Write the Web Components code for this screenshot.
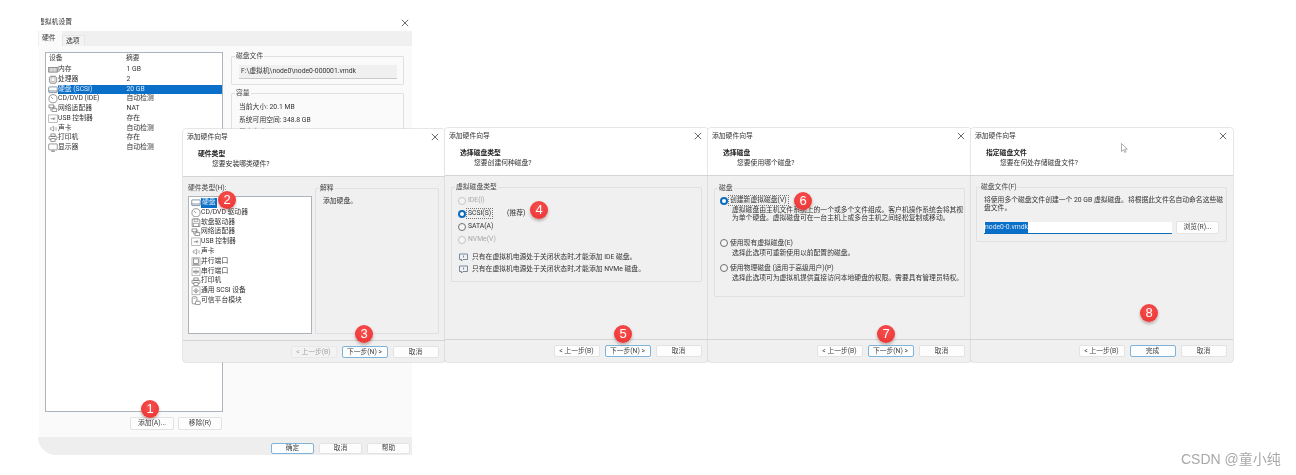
<!DOCTYPE html>
<html lang="zh"><head><meta charset="utf-8"><title>添加硬盘</title>
<style>
html,body{margin:0;padding:0;background:#fff}
body{font:6.8px/8.4px Roboto,"Noto Sans CJK SC",sans-serif;color:#333}
desk-top{filter:blur(.3px)}
</style></head><body>
<desk-top>
  <vm-window style="left:38px;top:13px;width:374px;height:442px">
    <tree-row slot="tree" icon="mem" name="内存" value="1 GB"></tree-row>
    <tree-row slot="tree" icon="cpu" name="处理器" value="2"></tree-row>
    <tree-row slot="tree" icon="hdd" name="硬盘 (SCSI)" value="20 GB" selected></tree-row>
    <tree-row slot="tree" icon="cd" name="CD/DVD (IDE)" value="自动检测"></tree-row>
    <tree-row slot="tree" icon="net" name="网络适配器" value="NAT"></tree-row>
    <tree-row slot="tree" icon="usb" name="USB 控制器" value="存在"></tree-row>
    <tree-row slot="tree" icon="snd" name="声卡" value="自动检测"></tree-row>
    <tree-row slot="tree" icon="prn" name="打印机" value="存在"></tree-row>
    <tree-row slot="tree" icon="mon" name="显示器" value="自动检测"></tree-row>
  </vm-window>

  <wizard-dialog style="left:183px;top:129px;width:262px;height:233px" heading="硬件类型" sub="您要安装哪类硬件?" back="disabled" next="下一步(N) &gt;">
    <hw-picker>
      <hw-item icon="hdd" name="硬盘" selected></hw-item>
      <hw-item icon="cd" name="CD/DVD 驱动器"></hw-item>
      <hw-item icon="fdd" name="软盘驱动器"></hw-item>
      <hw-item icon="net" name="网络适配器"></hw-item>
      <hw-item icon="usb" name="USB 控制器"></hw-item>
      <hw-item icon="snd" name="声卡"></hw-item>
      <hw-item icon="par" name="并行端口"></hw-item>
      <hw-item icon="ser" name="串行端口"></hw-item>
      <hw-item icon="prn" name="打印机"></hw-item>
      <hw-item icon="scs" name="通用 SCSI 设备"></hw-item>
      <hw-item icon="tpm" name="可信平台模块"></hw-item>
    </hw-picker>
  </wizard-dialog>

  <wizard-dialog style="left:445px;top:128px;width:263px;height:234px" heading="选择磁盘类型" sub="您要创建何种磁盘?" next="下一步(N) &gt;">
    <group-box label="虚拟磁盘类型" style="height:95px;padding:6px 0 0 6px">
      <radio-row disabled label="IDE(I)"></radio-row>
      <radio-row checked focus label="SCSI(S)" note="(推荐)"></radio-row>
      <radio-row label="SATA(A)"></radio-row>
      <radio-row disabled label="NVMe(V)"></radio-row>
      <note-line style="margin-top:5px">只有在虚拟机电源处于关闭状态时,才能添加 IDE 磁盘。</note-line>
      <note-line>只有在虚拟机电源处于关闭状态时,才能添加 NVMe 磁盘。</note-line>
    </group-box>
  </wizard-dialog>

  <wizard-dialog style="left:708px;top:128px;width:263px;height:234px" heading="选择磁盘" sub="您要使用哪个磁盘?" next="下一步(N) &gt;">
    <group-box label="磁盘" style="height:109px;margin-top:1px;padding:6px 0 0 5px">
      <radio-row checked focus label="创建新虚拟磁盘(V)" style="height:11px"></radio-row>
      <option-desc style="margin-bottom:15px">虚拟磁盘由主机文件系统上的一个或多个文件组成。客户机操作系统会将其视<br>为单个硬盘。虚拟磁盘可在一台主机上或多台主机之间轻松复制或移动。</option-desc>
      <radio-row label="使用现有虚拟磁盘(E)" style="height:11px"></radio-row>
      <option-desc style="margin-bottom:6px">选择此选项可重新使用以前配置的磁盘。</option-desc>
      <radio-row label="使用物理磁盘 (适用于高级用户)(P)" style="height:11px"></radio-row>
      <option-desc>选择此选项可为虚拟机提供直接访问本地硬盘的权限。需要具有管理员特权。</option-desc>
    </group-box>
  </wizard-dialog>

  <wizard-dialog style="left:971px;top:128px;width:262px;height:234px" heading="指定磁盘文件" sub="您要在何处存储磁盘文件?" next="完成" back="enabled">
    <group-box label="磁盘文件(F)" style="height:55px;margin-left:-1px;padding:8px 0 0 7px">
      <file-picker></file-picker>
    </group-box>
  </wizard-dialog>

  <mouse-cursor style="left:1121px;top:143px"></mouse-cursor>

  <step-badge style="left:150px;top:409px">1</step-badge>
  <step-badge style="left:227px;top:200px">2</step-badge>
  <step-badge style="left:364px;top:334px">3</step-badge>
  <step-badge style="left:539px;top:210px">4</step-badge>
  <step-badge style="left:623px;top:334px">5</step-badge>
  <step-badge style="left:803px;top:201px">6</step-badge>
  <step-badge style="left:886px;top:334px">7</step-badge>
  <step-badge style="left:1149px;top:313px">8</step-badge>

  <water-mark>CSDN @童小纯</water-mark>
</desk-top>

<script>
const ICONS={
 mem:'<rect x=".5" y="2.5" width="9" height="5" fill="#bbb"/><path d="M2 3v4M3.5 3v4M5 3v4M6.500 3v4M8 3v4" stroke="#eee"/>',
 cpu:'<rect x="1.500" y="1.500" width="7" height="7" rx="1.500"/><rect x="3" y="3" width="4" height="4" stroke="#aaa"/><path d="M3 .5v1M5 .5v1M7 .5v1M3 8.500v1M5 8.500v1M7 8.500v1M.5 3h1M.5 5h1M.5 7h1M8.500 3h1M8.500 5h1M8.500 7h1" stroke="#888"/>',
 hdd:'<rect x=".5" y="2" width="9" height="6" rx=".8" stroke="#46617c"/><path d="M.5 6.300h9" stroke="#46617c"/>',
 cd:'<circle cx="5" cy="5" r="4.300"/><path d="M2.800 3 5.200 5.400"/>',
 net:'<rect x=".8" y="1" width="5" height="3"/><rect x="4" y="5" width="5" height="3"/><path d="M2.500 4v2.500H4M7 5V2.500H5.800" stroke="#888"/>',
 usb:'<rect x=".5" y="1" width="9" height="8" stroke="#999"/><path d="M2.500 5h5M5 5l1.500-1.500M5 5l1.500 1.500"/>',
 snd:'<path d="M2 4h1.500L5.500 2.300v5.400L3.500 6H2z" stroke="#888"/><path d="M6.800 3.500q1 1.500 0 3M8 2.800q1.400 2.200 0 4.400" stroke="#aaa"/>',
 prn:'<rect x="2.800" y="1" width="4.400" height="2.500"/><rect x=".8" y="3.500" width="8.400" height="3.200" rx=".6"/><rect x="2.800" y="6" width="4.400" height="2.800" fill="#fff"/>',
 mon:'<rect x=".5" y="1" width="9" height="6.300" rx=".6"/><path d="M3 8.800h4M5 7.300v1.500"/>',
 fdd:'<path d="M1 1h7l1 1v7H1z"/><rect x="3" y="1" width="4" height="2.500" stroke="#888"/><rect x="2.500" y="5.500" width="5" height="3.500" stroke="#888"/>',
 par:'<rect x=".8" y=".8" width="8.400" height="8.400" stroke="#999"/><rect x="2.500" y="2" width="5" height="5"/><path d="M1.800 8h6.400"/>',
 ser:'<rect x=".8" y=".8" width="8.400" height="8.400" stroke="#999"/><path d="M2 5h6M5 2.500v5M3 3.500v3M7 3.500v3"/>',
 scs:'<rect x=".8" y=".8" width="8.400" height="8.400" stroke="#999"/><path d="M5 2.500 7.500 5 5 7.500 2.500 5z"/><circle cx="5" cy="5" r=".8"/>',
 tpm:'<rect x="1" y=".8" width="5" height="7.500" rx="1"/><rect x="4.500" y="5.500" width="5" height="3.500" rx=".8" fill="#fff"/><path d="M2.500 2.500h2" stroke="#888"/>'
};
const h=(s)=>String(s??'').replace(/&/g,'&amp;').replace(/</g,'&lt;').replace(/>/g,'&gt;').replace(/"/g,'&quot;');
class Base extends HTMLElement{
  constructor(){super();this.attachShadow({mode:'open'});}
  connectedCallback(){this.shadowRoot.innerHTML=this.render();}
}
const def=(n,r)=>customElements.define(n,class extends Base{render(){return r.call(this,this)}});

def('desk-top',()=>`<style>:host{display:block;position:relative;width:1296px;height:475px;overflow:hidden;background:#fff}</style><slot></slot>`);

def('hw-icon',e=>`<style>:host{display:block;width:10px;height:9.500px}svg{display:block;width:100%;height:100%;fill:none;stroke:#666;stroke-width:.7}</style><svg viewBox="0 0 10 10">${ICONS[e.getAttribute('name')]||''}</svg>`);

def('push-btn',e=>`<style>
:host{display:flex;align-items:center;justify-content:center;box-sizing:border-box;width:46px;height:12px;background:#fdfdfd;border:1px solid #e3e3e3;border-radius:2px;color:#444;white-space:nowrap}
:host([primary]){border-color:#7fb3d8;background:#fcfdfe}
:host([disabled]){background:#f3f3f3;color:#a5a5a5;border-color:#e8e8e8}
</style><slot></slot>`);

def('tree-row',e=>{const sel=e.hasAttribute('selected');return `<style>
:host{display:grid;grid-template-columns:11px 68.500px 1fr;height:9.750px;line-height:9.750px;align-items:center;white-space:nowrap;padding-left:1px}
.n,.v{height:100%}
.n.s,.v.s{background:#0a6fc9;color:#dce9f5}
hw-icon{margin-left:1px}
</style><hw-icon name="${h(e.getAttribute('icon'))}"></hw-icon><div class="n ${sel?'s':''}">${h(e.getAttribute('name'))}</div><div class="v ${sel?'s':''}">${h(e.getAttribute('value'))}</div>`});

def('group-box',e=>`<style>
:host{display:block;position:relative;box-sizing:border-box;border:1px solid #e0e0e0;border-radius:1px}
.l{position:absolute;left:3px;top:-5px;padding:0 1px;background:var(--gb,#f0f0f0);line-height:9px;white-space:nowrap;color:#444}
</style><span class="l">${h(e.getAttribute('label'))}</span><slot></slot>`);

def('vm-window',e=>`<style>
:host{position:absolute;display:flex;flex-direction:column;box-sizing:border-box;background:#fff;border-bottom-left-radius:18px;overflow:hidden}
.title{display:flex;align-items:center;justify-content:space-between;height:18px;flex:none;padding:1px 3px 0 0;box-sizing:border-box}
.title span{clip-path:inset(0 0 0 3px);line-height:17px}
.tabs{display:flex;height:15px;flex:none;background:#f0f0f0;padding-left:1px;box-sizing:border-box}
.tab{width:23px;box-sizing:border-box;padding-left:3px;line-height:15px;background:#fafafa}
.tab+.tab{padding-left:3px;margin-top:4px;line-height:10px;background:#f3f3f3;border:solid #e6e6e6;border-width:1px 1px 0}
.panel{flex:none;height:391px;box-sizing:border-box;background:#fafafa;margin-left:1px;padding:6px 0 0 6px;display:grid;grid-template-columns:178px 173px;column-gap:8px;align-content:start}
.left{display:flex;flex-direction:column}
.list{height:360px;box-sizing:border-box;border:1px solid #adb4bb;background:#fff}
.head{display:grid;grid-template-columns:77px 1fr;height:12px;line-height:11px;padding-left:3px;color:#444}
.btns{display:flex;justify-content:flex-end;gap:4px;margin:5px 1px 0 0}
.btns push-btn{width:44px;height:13px}
.right{display:flex;flex-direction:column;--gb:#fafafa}
.file{margin:8px 6px 0 7px;height:14px;box-sizing:border-box;background:#f0f0f0;border-bottom:1px solid #c9c9c9;padding-left:2px;line-height:13px;white-space:nowrap}
.cap{padding:7px 0 0 7px;line-height:12.500px}
.foot{flex:1;background:#eeeeee;display:flex;justify-content:flex-end;gap:5px;padding:6px 2px 0 0}
.foot push-btn{width:43px;height:11px}
</style>
<div class="title"><span>虚拟机设置</span><x-mark></x-mark></div>
<div class="tabs"><div class="tab">硬件</div><div class="tab">选项</div></div>
<div class="panel">
  <div class="left">
    <div class="list"><div class="head"><span>设备</span><span>摘要</span></div><slot name="tree"></slot></div>
    <div class="btns"><push-btn>添加(A)...</push-btn><push-btn>移除(R)</push-btn></div>
  </div>
  <div class="right">
    <group-box label="磁盘文件" style="height:29px;margin-top:4px"><div class="file">F:\\虚拟机\\node0\\node0-000001.vmdk</div></group-box>
    <group-box label="容量" style="height:200px;margin-top:8px"><div class="cap">当前大小: 20.1 MB<br>系统可用空间: 348.8 GB<br>最大大小: 20 GB</div></group-box>
  </div>
</div>
<div class="foot"><push-btn primary>确定</push-btn><push-btn>取消</push-btn><push-btn>帮助</push-btn></div>`);

def('x-mark',()=>`<style>:host{display:block;width:8px;height:8px}svg{display:block;width:100%;height:100%}</style><svg viewBox="0 0 8 8"><path d="M.8.8l6.400 6.400M7.200.8.800 7.200" stroke="#444" stroke-width=".8" fill="none"/></svg>`);

def('wizard-dialog',e=>{const b=e.getAttribute('back');return `<style>
:host{position:absolute;display:flex;flex-direction:column;box-sizing:border-box;background:#f0f0f0;border-radius:3px;box-shadow:0 0 0 .5px #d6d6d6,0 0 2px rgba(0,0,0,.12);overflow:hidden}
.top{background:#fff;height:48px;flex:none;border-bottom:1px solid #d4d4d4;box-sizing:border-box}
.title{display:flex;justify-content:space-between;align-items:center;height:16px;padding:0 6px 0 4px}
.hd{font-weight:700;margin:4px 0 0 15px;line-height:10px;color:#222}
.sub{margin-left:29px;line-height:10px}
.body{flex:none;height:163px;box-sizing:border-box;padding:11px 6px 0 6px;display:flex;flex-direction:column}
.foot{flex:1;border-top:1px solid #d4d4d4;display:flex;justify-content:flex-end;gap:5px;padding:5px 6.500px 0 0}
</style>
<div class="top"><div class="title"><span>添加硬件向导</span><x-mark></x-mark></div><div class="hd">${h(e.getAttribute('heading'))}</div><div class="sub">${h(e.getAttribute('sub'))}</div></div>
<div class="body"><slot></slot></div>
<div class="foot"><push-btn ${b==='disabled'?'disabled':''}>&lt; 上一步(B)</push-btn><push-btn primary>${h(e.getAttribute('next'))}</push-btn><push-btn>取消</push-btn></div>`});

def('hw-picker',()=>`<style>
:host{display:grid;grid-template-columns:124px 124px;column-gap:3px;grid-template-rows:8px 138px;margin-left:-1px;height:146px}
.lab{line-height:8px;margin-top:-4px;white-space:nowrap;color:#444}
.list{grid-row:2;border:1px solid #adb4bb;background:#fff;box-sizing:border-box;padding:1px 0 0 2px}
group-box{grid-column:2;grid-row:1/3;height:146px}
.t{padding:8px 0 0 7px}
</style><div class="lab">硬件类型(H):</div><div class="list"><slot></slot></div><group-box label="解释"><div class="t">添加硬盘。</div></group-box>`);

def('hw-item',e=>`<style>
:host{display:flex;height:9.800px;line-height:9.800px;align-items:center;white-space:nowrap}
hw-icon{flex:none}
.s{background:#0a6fc9;color:#dce9f5;padding:0 1px;height:100%}
</style><hw-icon name="${h(e.getAttribute('icon'))}"></hw-icon><span class="${e.hasAttribute('selected')?'s':''}">${h(e.getAttribute('name'))}</span>`);

def('radio-row',e=>{const note=e.getAttribute('note');return `<style>
:host{display:flex;align-items:center;height:13px;white-space:nowrap;gap:1px}
:host([disabled]){color:#a8a8a8}
i{flex:none;box-sizing:border-box;width:8px;height:8px;border-radius:50%;border:.8px solid #6f6f6f;background:#f5f5f5}
:host([disabled]) i{border-color:#c4c4c4}
:host([checked]) i{border:2.300px solid #0a6cbd;background:#fff}
.t{padding:0 1px}
:host([focus]) .t{outline:.6px dotted #777}
.n{margin-left:14px}
</style><i></i><span class="t">${h(e.getAttribute('label'))}</span>${note?`<span class="n">${h(note)}</span>`:''}`});

def('note-line',()=>`<style>
:host{display:flex;align-items:center;height:12px;white-space:nowrap;gap:4px;padding-left:1px}
svg{flex:none;width:9px;height:9px;fill:none;stroke:#5a7288;stroke-width:.8}
</style><svg viewBox="0 0 9 9"><path d="M.5 1h8v5.500H4L2.500 8V6.500h-2z"/><path d="M4.500 2.500v2"/></svg><span><slot></slot></span>`);

def('option-desc',()=>`<style>:host{display:block;margin-left:12px;line-height:8.300px;white-space:nowrap}</style><slot></slot>`);

def('file-picker',()=>`<style>
:host{display:block}
p{margin:0;line-height:8.300px;white-space:nowrap}
.row{display:flex;gap:4px;margin-top:9px;align-items:flex-start}
.in{width:188px;height:12px;box-sizing:border-box;background:#fff;border-bottom:1px solid #0a6cbd;padding-left:1px;line-height:11px}
.in b{font-weight:400;background:#0a6fc9;color:#dce9f5;display:inline-block}
push-btn{width:43px;height:13px;margin-top:-1px}
</style><p>将使用多个磁盘文件创建一个 20 GB 虚拟磁盘。将根据此文件名自动命名这些磁<br>盘文件。</p><div class="row"><div class="in"><b>node0-0.vmdk</b></div><push-btn>浏览(R)...</push-btn></div>`);

def('mouse-cursor',()=>`<style>:host{position:absolute;display:block;width:7px;height:10px}svg{display:block}</style><svg width="7" height="10" viewBox="0 0 7 10"><path d="M.5.500v8l2-1.800L3.800 9.500l1.200-.6L3.800 6.200H6.300z" fill="#fff" stroke="#777" stroke-width=".6"/></svg>`);

def('step-badge',()=>`<style>
:host{position:absolute;display:flex;align-items:center;justify-content:center;width:18px;height:18px;margin:-9px 0 0 -9px;border-radius:50%;background:radial-gradient(circle at 50% 35%,#f8504f,#e8302f);box-shadow:0 2px 3px rgba(90,40,40,.35);color:#fff;font:13px/18px "Liberation Sans",sans-serif}
</style><slot></slot>`);

def('water-mark',()=>`<style>
:host{position:absolute;left:1181px;top:451px;font:14px/16px "Liberation Sans","Noto Sans CJK SC",sans-serif;color:#a8a8a8;white-space:nowrap}
</style><slot></slot>`);
</script>
</body></html>
